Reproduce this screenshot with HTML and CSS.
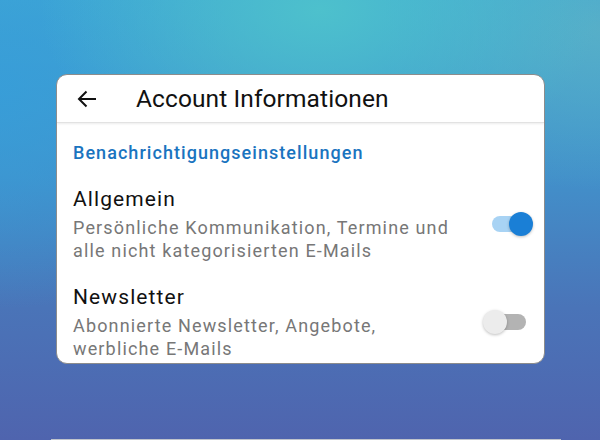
FILE: index.html
```html
<!DOCTYPE html>
<html lang="de">
<head>
<meta charset="utf-8">
<link rel="stylesheet" href="styles.css">
</head>
<body>
<div class="page">
  <div class="card">
    <div class="header">
      <svg class="back" width="20" height="18" viewBox="0 0 20 18"><path d="M19 9H2.5M9.5 1.5L2 9l7.5 7.5" fill="none" stroke="#111" stroke-width="2"/></svg>
      <div class="title">Account Informationen</div>
    </div>
    <div class="content">
      <div class="section">Benachrichtigungseinstellungen</div>
      <div class="item">
        <div class="text">
          <div class="name">Allgemein</div>
          <div class="desc">Persönliche Kommunikation, Termine und<br>alle nicht kategorisierten E-Mails</div>
        </div>
        <div class="switch on"><div class="track"></div><div class="thumb"></div></div>
      </div>
      <div class="item second">
        <div class="text">
          <div class="name">Newsletter</div>
          <div class="desc">Abonnierte Newsletter, Angebote,<br>werbliche E-Mails</div>
        </div>
        <div class="switch off"><div class="track"></div><div class="thumb"></div></div>
      </div>
    </div>
  </div>
  <div class="baseline"></div>
</div>
</body>
</html>
```
FILE: styles.css
```css
html, body { margin: 0; padding: 0; }
body {
  width: 600px;
  height: 440px;
  overflow: hidden;
  font-family: Roboto, "Noto Sans", sans-serif;
  background:
    radial-gradient(ellipse 280px 170px at 320px 10px, rgba(78,194,204,0.95), rgba(78,194,204,0) 100%),
    radial-gradient(ellipse 220px 160px at 600px 30px, rgba(92,178,198,0.8), rgba(92,178,198,0) 100%),
    radial-gradient(ellipse 240px 220px at 0px 90px, rgba(54,158,218,0.8), rgba(54,158,218,0) 100%),
    linear-gradient(180deg, #3fa6d4 0%, #4290ca 40%, #4a74b8 70%, #4f64ae 100%);
}
.page {
  height: 440px;
  display: flex;
  flex-direction: column;
}
.card {
  margin: 74px 0 0 56px;
  width: 487px;
  height: 288px;
  background: #fff;
  border: 1px solid #8c8c8c;
  border-radius: 11px;
  overflow: hidden;
  display: flex;
  flex-direction: column;
}
.header {
  height: 47px;
  flex: none;
  display: flex;
  align-items: center;
  padding-left: 20px;
  border-bottom: 1px solid #e2e2e2;
  box-shadow: 0 1px 2px rgba(0,0,0,0.08);
}
.back { display: block; }
.title {
  margin-left: 39px;
  font-size: 24.5px;
  color: #111;
  letter-spacing: 0.1px;
}
.content {
  padding: 18px 18px 0 16px;
}
.section {
  font-size: 18px;
  line-height: 24px;
  color: #1a74bf;
  font-weight: 500;
  letter-spacing: 1.05px;
}
.item {
  display: flex;
  align-items: center;
  justify-content: space-between;
  margin-top: 21px;
}
.item.second { margin-top: 22px; }
.name {
  font-size: 21px;
  line-height: 26px;
  color: #111;
  letter-spacing: 1.1px;
}
.desc {
  margin-top: 4px;
  font-size: 18px;
  line-height: 23px;
  color: #777;
  letter-spacing: 1.15px;
}
.switch {
  position: relative;
  width: 34px;
  height: 16px;
}
.track {
  width: 34px;
  height: 16px;
  border-radius: 8px;
}
.thumb {
  position: absolute;
  top: -4px;
  width: 24px;
  height: 24px;
  border-radius: 50%;
  box-shadow: 0 1px 3px rgba(0,0,0,0.25);
}
.on .track { background: #a8d3f4; }
.on .thumb { right: -7px; background: #1a7fd6; }
.off .track { background: #b3b3b3; }
.off .thumb { left: -9px; background: #ececec; }
.baseline {
  margin: auto 0 0 51px;
  width: 510px;
  height: 1px;
  background: #c0c4cc;
}
```
